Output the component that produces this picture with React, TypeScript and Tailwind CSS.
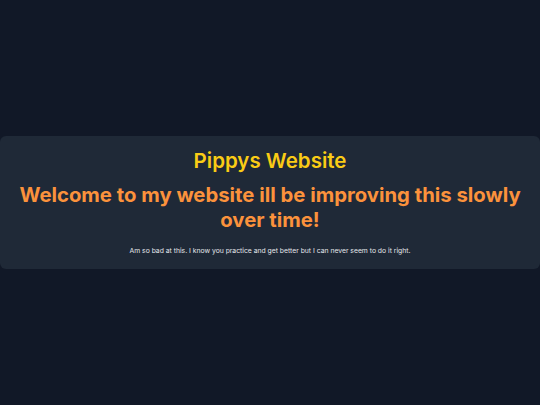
import React from 'react';

export default function App() {
  return (
    <div
      className="min-h-screen bg-[#111827] flex items-center justify-center"
      style={{ fontFamily: 'Inter, "Noto Sans", sans-serif' }}
    >
      <div className="w-full bg-[#1f2937] rounded-md px-2 pt-[11px] pb-[13px] text-center">
        <h1 className="text-[20.5px] leading-7 font-semibold text-[#facc15]">Pippys Website</h1>
        <h2 className="mt-[7px] text-[20.3px] leading-[25px] font-bold text-[#fb923c]">
          Welcome to my website ill be improving this slowly over time!
        </h2>
        <p className="mt-[14px] text-[6.8px] leading-[10px] text-[#e5e7eb]">
          Am so bad at this. I know you practice and get better but I can never seem to do it right.
        </p>
      </div>
    </div>
  );
}
